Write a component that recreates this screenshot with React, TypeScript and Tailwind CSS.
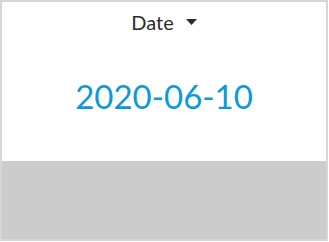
export default function App() {
  return (
    <div className="w-[329px] h-[242px] bg-white">
      <div
        className="w-[328px] h-[241px] border-2 border-[#d6d6d6] flex flex-col"
        style={{ fontFamily: "Lato, 'Open Sans', sans-serif" }}
      >
        <div className="h-[159px] bg-white flex flex-col items-center">
          <button className="mt-[6px] flex items-center gap-[12px] text-[20px] leading-[28px] text-[#2b2b2b]">
            <span>Date</span>
            <svg width="11" height="6" viewBox="0 0 11 6" className="mb-[1px]">
              <path d="M0 0h11L5.5 6z" fill="#2b2b2b" />
            </svg>
          </button>
          <div className="mt-[40px] text-[33px] leading-[40px] text-[#0b9ad6]">2020-06-10</div>
        </div>
        <div className="flex-1 bg-[#cccccc]" />
      </div>
    </div>
  );
}
